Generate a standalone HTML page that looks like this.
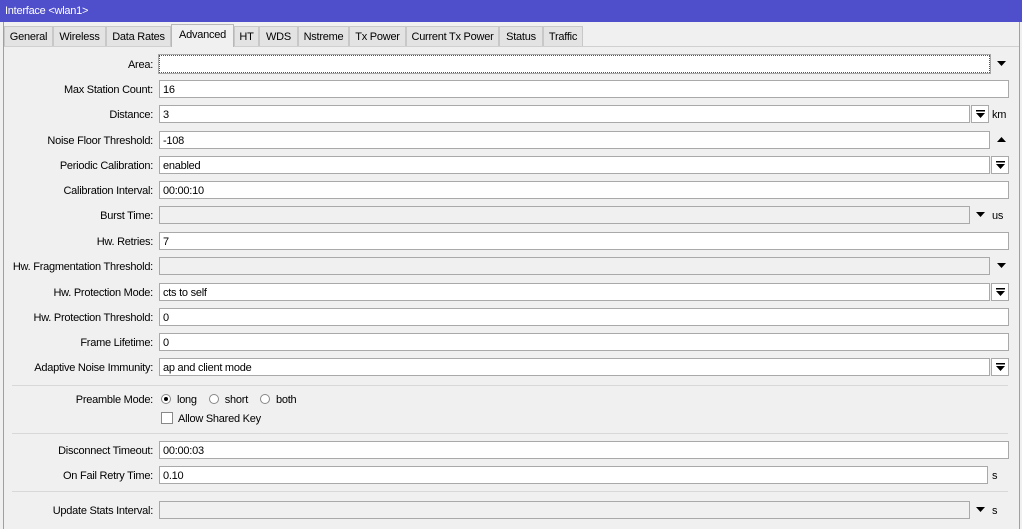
<!DOCTYPE html>
<html><head><meta charset="utf-8"><style>
*{box-sizing:border-box;margin:0;padding:0}
body{width:1022px;height:529px;overflow:hidden;background:#f0f0f0;font-family:"Liberation Sans",sans-serif;font-size:11px;letter-spacing:-0.25px;color:#000;position:relative}
.title{position:absolute;left:0;top:0;width:1022px;height:22px;background:#4f4fcc;color:#fff;padding:5px 0 0 5px}
.frame{position:absolute;left:3px;top:22px;width:1017px;height:507px;border-left:1px solid #a0a0a0;border-right:1px solid #a0a0a0}
.tab{position:absolute;top:26px;height:20px;background:#e3e3e3;border:1px solid #c8c8c8;border-bottom:none;padding-top:4px;text-align:center}
.tab.act{top:24px;height:23px;background:#f0f0f0;border-color:#b8b8b8;padding-top:4px}
.line{position:absolute;left:4px;top:46px;width:1015px;border-top:1px solid #d0d0d0}
.lbl{position:absolute;right:869px;text-align:right;white-space:nowrap}
.fld{position:absolute;left:159px;height:18px;background:#fff;border:1px solid #a9a9a9;padding:3px 0 0 3px}
.dis{background:#f0f0f0}
.btn{position:absolute;width:18px;height:18px;border:1px solid #a9a9a9;background:#fff}
.btn svg{position:absolute;left:4px;top:4px}
.arr{position:absolute}
.u{position:absolute;left:992px}
.sep{position:absolute;left:12px;width:996px;border-top:1px solid #d8d8d8}
.rad{display:inline-block;width:10px;height:10px;border:1px solid #888;border-radius:50%;background:#fff;vertical-align:-1px;margin-right:6px;position:relative}
.rad.on:after{content:"";position:absolute;left:2px;top:2px;width:4px;height:4px;background:#000;border-radius:50%}
</style></head><body>
<div class="title">Interface &lt;wlan1&gt;</div>
<div class="frame"></div>
<div class="line"></div>
<div class="tab" style="left:4px;width:49px">General</div>
<div class="tab" style="left:53px;width:53px">Wireless</div>
<div class="tab" style="left:106px;width:65px">Data Rates</div>
<div class="tab act" style="left:171px;width:63px">Advanced</div>
<div class="tab" style="left:234px;width:25px">HT</div>
<div class="tab" style="left:259px;width:39px">WDS</div>
<div class="tab" style="left:298px;width:51px">Nstreme</div>
<div class="tab" style="left:349px;width:57px">Tx Power</div>
<div class="tab" style="left:406px;width:93px">Current Tx Power</div>
<div class="tab" style="left:499px;width:44px">Status</div>
<div class="tab" style="left:543px;width:40px">Traffic</div>

<div class="lbl" style="top:59px">Area:</div>
<div class="fld" style="top:55px;width:831px;border:1px dotted #555;outline:1px solid #a9a9a9"></div>
<svg class="arr" style="left:997px;top:61px" width="9" height="5"><path d="M0 0H9L4.5 5Z"/></svg>

<div class="lbl" style="top:84px">Max Station Count:</div>
<div class="fld" style="top:80px;width:850px">16</div>

<div class="lbl" style="top:109px">Distance:</div>
<div class="fld" style="top:105px;width:811px">3</div>
<div class="btn" style="left:971px;top:105px"><svg width="9" height="9"><path d="M0 0H9V1.5H0Z M0 3H9L4.5 8Z"/></svg></div>
<div class="u" style="top:109px">km</div>

<div class="lbl" style="top:135px">Noise Floor Threshold:</div>
<div class="fld" style="top:131px;width:831px">-108</div>
<svg class="arr" style="left:997px;top:137px" width="9" height="5"><path d="M0 5H9L4.5 0Z"/></svg>

<div class="lbl" style="top:160px">Periodic Calibration:</div>
<div class="fld" style="top:156px;width:831px">enabled</div>
<div class="btn" style="left:991px;top:156px"><svg width="9" height="9"><path d="M0 0H9V1.5H0Z M0 3H9L4.5 8Z"/></svg></div>

<div class="lbl" style="top:185px">Calibration Interval:</div>
<div class="fld" style="top:181px;width:850px">00:00:10</div>

<div class="lbl" style="top:210px">Burst Time:</div>
<div class="fld dis" style="top:206px;width:811px"></div>
<svg class="arr" style="left:976px;top:212px" width="9" height="5"><path d="M0 0H9L4.5 5Z"/></svg>
<div class="u" style="top:210px">us</div>

<div class="lbl" style="top:236px">Hw. Retries:</div>
<div class="fld" style="top:232px;width:850px">7</div>

<div class="lbl" style="top:261px">Hw. Fragmentation Threshold:</div>
<div class="fld dis" style="top:257px;width:831px"></div>
<svg class="arr" style="left:997px;top:263px" width="9" height="5"><path d="M0 0H9L4.5 5Z"/></svg>

<div class="lbl" style="top:287px">Hw. Protection Mode:</div>
<div class="fld" style="top:283px;width:831px">cts to self</div>
<div class="btn" style="left:991px;top:283px"><svg width="9" height="9"><path d="M0 0H9V1.5H0Z M0 3H9L4.5 8Z"/></svg></div>

<div class="lbl" style="top:312px">Hw. Protection Threshold:</div>
<div class="fld" style="top:308px;width:850px">0</div>

<div class="lbl" style="top:337px">Frame Lifetime:</div>
<div class="fld" style="top:333px;width:850px">0</div>

<div class="lbl" style="top:362px">Adaptive Noise Immunity:</div>
<div class="fld" style="top:358px;width:831px">ap and client mode</div>
<div class="btn" style="left:991px;top:358px"><svg width="9" height="9"><path d="M0 0H9V1.5H0Z M0 3H9L4.5 8Z"/></svg></div>

<div class="sep" style="top:385px"></div>
<div class="lbl" style="top:394px">Preamble Mode:</div>
<div style="position:absolute;left:161px;top:394px"><span class="rad on"></span>long<span class="rad" style="margin-left:12px"></span>short<span class="rad" style="margin-left:12px"></span>both</div>
<div style="position:absolute;left:161px;top:412px"><span style="display:inline-block;width:12px;height:12px;border:1px solid #888;background:#fff;vertical-align:-2px;margin-right:5px"></span>Allow Shared Key</div>
<div class="sep" style="top:433px"></div>

<div class="lbl" style="top:445px">Disconnect Timeout:</div>
<div class="fld" style="top:441px;width:850px">00:00:03</div>

<div class="lbl" style="top:470px">On Fail Retry Time:</div>
<div class="fld" style="top:466px;width:829px">0.10</div>
<div class="u" style="top:470px">s</div>

<div class="sep" style="top:491px"></div>
<div class="lbl" style="top:505px">Update Stats Interval:</div>
<div class="fld dis" style="top:501px;width:811px"></div>
<svg class="arr" style="left:976px;top:507px" width="9" height="5"><path d="M0 0H9L4.5 5Z"/></svg>
<div class="u" style="top:505px">s</div>
</body></html>
